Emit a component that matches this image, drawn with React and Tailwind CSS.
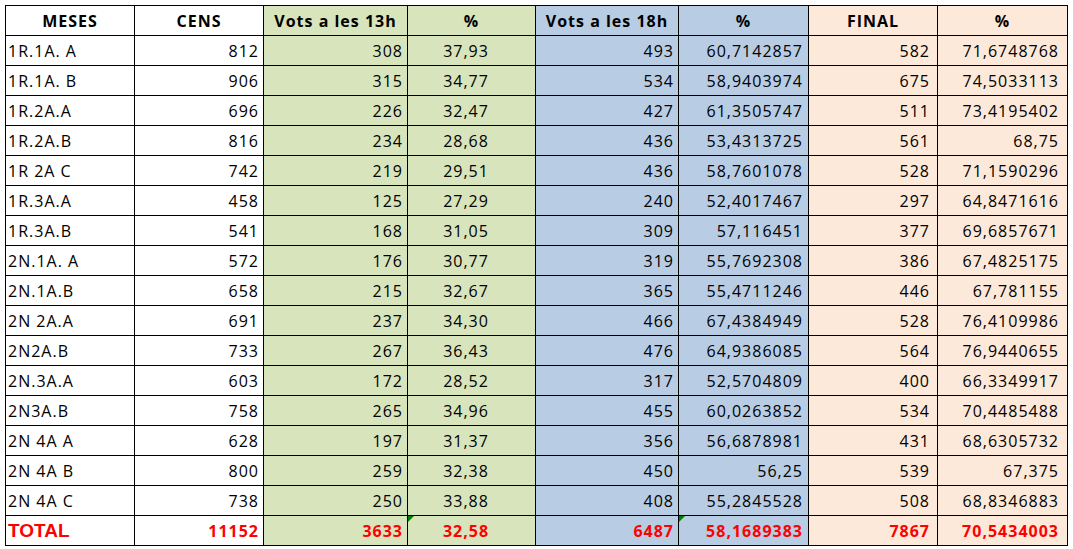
import React from 'react';

const rows = [
  ['1R.1A. A', '812', '308', '37,93', '493', '60,7142857', '582', '71,6748768'],
  ['1R.1A. B', '906', '315', '34,77', '534', '58,9403974', '675', '74,5033113'],
  ['1R.2A.A', '696', '226', '32,47', '427', '61,3505747', '511', '73,4195402'],
  ['1R.2A.B', '816', '234', '28,68', '436', '53,4313725', '561', '68,75'],
  ['1R 2A C', '742', '219', '29,51', '436', '58,7601078', '528', '71,1590296'],
  ['1R.3A.A', '458', '125', '27,29', '240', '52,4017467', '297', '64,8471616'],
  ['1R.3A.B', '541', '168', '31,05', '309', '57,116451', '377', '69,6857671'],
  ['2N.1A. A', '572', '176', '30,77', '319', '55,7692308', '386', '67,4825175'],
  ['2N.1A.B', '658', '215', '32,67', '365', '55,4711246', '446', '67,781155'],
  ['2N 2A.A', '691', '237', '34,30', '466', '67,4384949', '528', '76,4109986'],
  ['2N2A.B', '733', '267', '36,43', '476', '64,9386085', '564', '76,9440655'],
  ['2N.3A.A', '603', '172', '28,52', '317', '52,5704809', '400', '66,3349917'],
  ['2N3A.B', '758', '265', '34,96', '455', '60,0263852', '534', '70,4485488'],
  ['2N 4A A', '628', '197', '31,37', '356', '56,6878981', '431', '68,6305732'],
  ['2N 4A B', '800', '259', '32,38', '450', '56,25', '539', '67,375'],
  ['2N 4A C', '738', '250', '33,88', '408', '55,2845528', '508', '68,8346883'],
];

const total = ['TOTAL', '11152', '3633', '32,58', '6487', '58,1689383', '7867', '70,5434003'];

const headers = ['MESES', 'CENS', 'Vots a les 13h', '%', 'Vots a les 18h', '%', 'FINAL', '%'];

// background + alignment per column
const cols = [
  'bg-white justify-start pl-[2px]',
  'bg-white justify-end pr-[4px]',
  'bg-[#d8e4bc] justify-end pr-[4px]',
  'bg-[#d8e4bc] justify-center pr-[11px]',
  'bg-[#b8cce4] justify-end pr-[4px]',
  'bg-[#b8cce4] justify-end pr-[5px]',
  'bg-[#fde9d9] justify-end pr-[7px]',
  'bg-[#fde9d9] justify-end pr-[8px]',
];

const headBg = ['bg-white', 'bg-white', 'bg-[#d8e4bc]', 'bg-[#d8e4bc]', 'bg-[#b8cce4]', 'bg-[#b8cce4]', 'bg-[#fde9d9]', 'bg-[#fde9d9]'];

const cell = 'relative h-[30px] flex items-center border-r border-b border-black';

export default function App() {
  return (
    <div className="min-h-screen bg-white p-[5px] text-black" style={{ fontFamily: '"Open Sans", "Liberation Sans", sans-serif' }}>
      <div className="grid w-max grid-cols-[129px_129px_144px_128px_143px_130px_129px_130px] border-l border-t border-black text-[16px] tracking-[1px]">
        {headers.map((h, i) => (
          <div key={i} className={`${cell} ${headBg[i]} justify-center font-bold pt-px`}>
            {h}
          </div>
        ))}

        {rows.map((r) =>
          r.map((v, i) => (
            <div key={r[0] + i} className={`${cell} ${cols[i]}`}>
              {v}
            </div>
          ))
        )}

        {/* Total row */}
        {total.map((v, i) => (
          <div key={'t' + i} className={`${cell} ${cols[i]} font-bold text-[#ff0000]`}>
            {(i === 3 || i === 5) && (
              <span className="absolute left-0 top-0 w-0 h-0 border-t-[6px] border-r-[6px] border-t-[#008000] border-r-transparent" />
            )}
            {i === 0 ? (
              <span className="tracking-normal text-[19px] pt-[2px]" style={{ fontFamily: '"Liberation Sans", Arial, sans-serif' }}>
                {v}
              </span>
            ) : (
              v
            )}
          </div>
        ))}
      </div>
    </div>
  );
}
